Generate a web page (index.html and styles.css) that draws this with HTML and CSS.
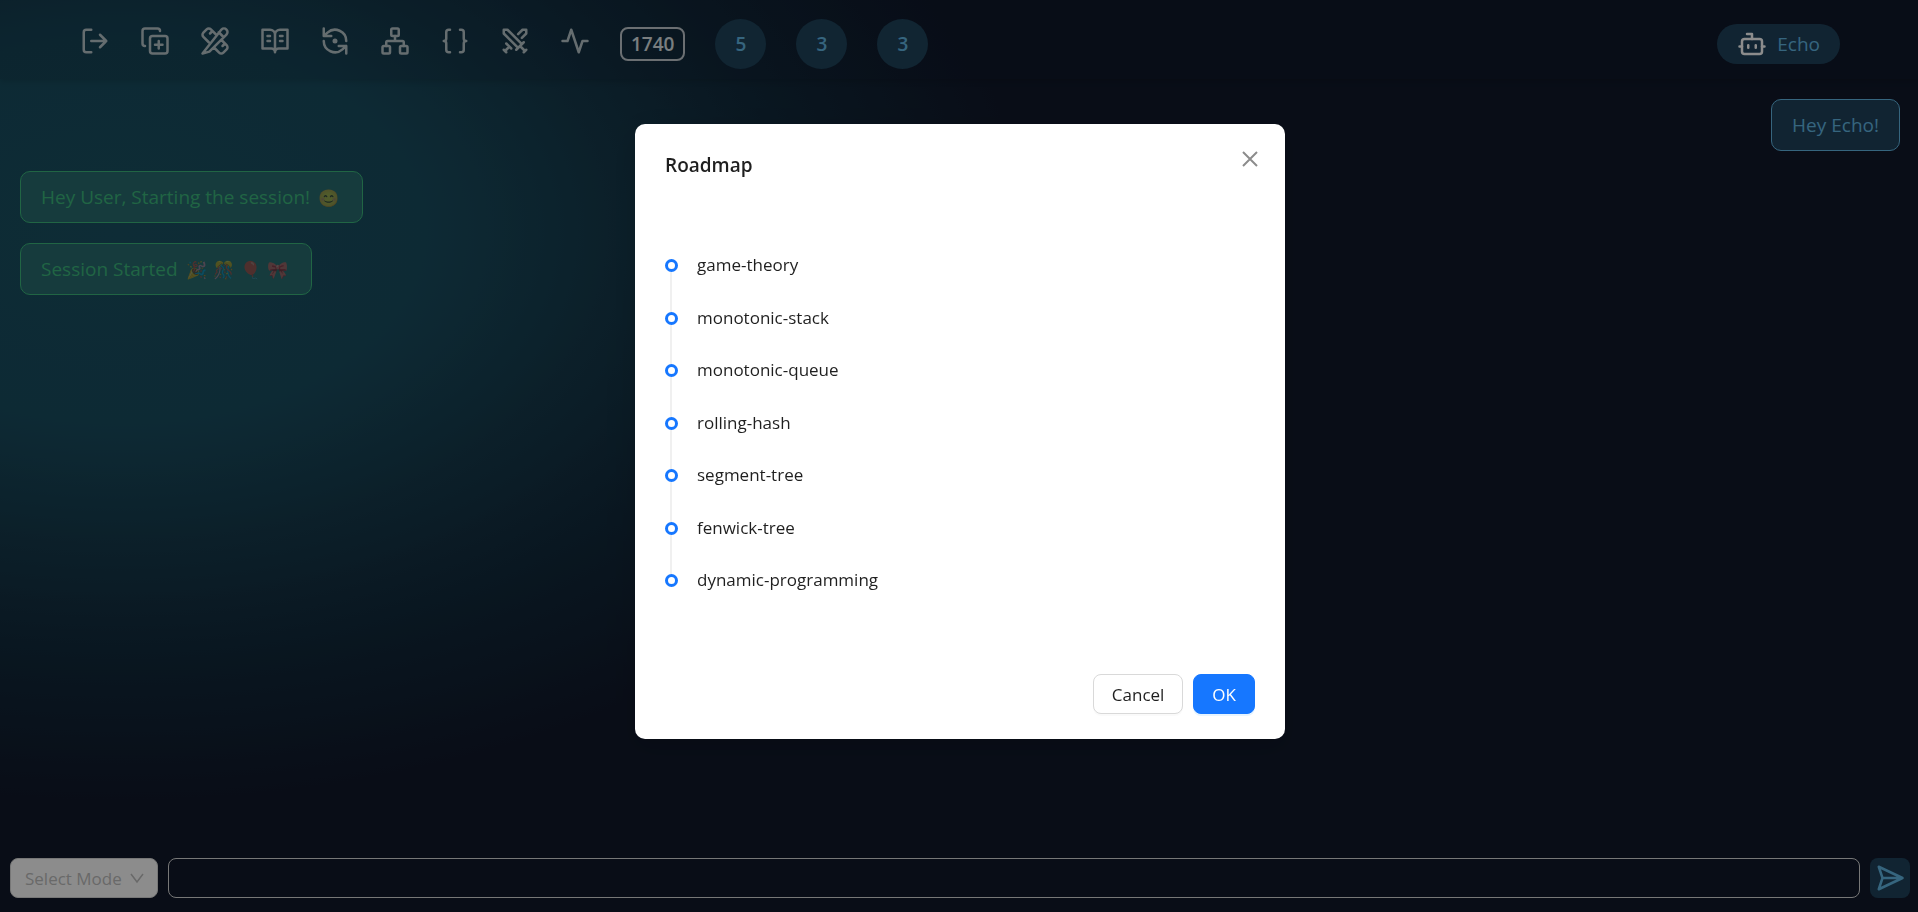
FILE: index.html
```html
<!DOCTYPE html>
<html lang="en">
<head>
<meta charset="utf-8">
<title>Echo</title>
<link rel="stylesheet" href="styles.css">
</head>
<body>
<div class="app">
  <header class="topbar">
    <nav class="tools" aria-label="Tools">
      <button class="tool" aria-label="Log out"><svg class="icon" viewBox="0 0 24 24"><path d="M9 21H5a2 2 0 0 1-2-2V5a2 2 0 0 1 2-2h4M16 17l5-5-5-5M21 12H9"/></svg></button>
      <button class="tool" aria-label="New session"><svg class="icon" viewBox="0 0 24 24"><path d="M15 12v6M12 15h6M4 16c-1.1 0-2-.9-2-2V4c0-1.1.9-2 2-2h10c1.1 0 2 .9 2 2"/><rect x="8" y="8" width="14" height="14" rx="2"/></svg></button>
      <button class="tool" aria-label="Practice"><svg class="icon" viewBox="0 0 24 24"><path d="m15 5 4 4M13 7 8.7 2.7a2.41 2.41 0 0 0-3.4 0L2.7 5.3a2.41 2.41 0 0 0 0 3.4L7 13M8 6l2-2M2 22l5.500-1.500L21.170 6.830a2.820 2.820 0 0 0-4-4ZM18 16l2-2M17 11l4.300 4.300c.94.94.94 2.460 0 3.400l-2.600 2.600c-.94.94-2.460.94-3.400 0L11 17"/></svg></button>
      <button class="tool" aria-label="Study"><svg class="icon" viewBox="0 0 24 24"><path d="M2 3h6a4 4 0 0 1 4 4v14a3 3 0 0 0-3-3H2zM22 3h-6a4 4 0 0 0-4 4v14a3 3 0 0 1 3-3h7zM6 8h2M6 12h2M16 8h2M16 12h2"/></svg></button>
      <button class="tool" aria-label="Revise"><svg class="icon" viewBox="0 0 24 24"><path d="M3 2v6h6M21 12A9 9 0 0 0 6 5.300L3 8M21 22v-6h-6M3 12a9 9 0 0 0 15 6.700l3-2.700"/><circle cx="12" cy="12" r="1"/></svg></button>
      <button class="tool" aria-label="Roadmap"><svg class="icon" viewBox="0 0 24 24"><rect x="16" y="16" width="6" height="6" rx="1"/><rect x="2" y="16" width="6" height="6" rx="1"/><rect x="9" y="2" width="6" height="6" rx="1"/><path d="M5 16v-3a1 1 0 0 1 1-1h12a1 1 0 0 1 1 1v3M12 12V8"/></svg></button>
      <button class="tool" aria-label="Code"><svg class="icon" viewBox="0 0 24 24"><path d="M8 3H7a2 2 0 0 0-2 2v5a2 2 0 0 1-2 2 2 2 0 0 1 2 2v5c0 1.100.9 2 2 2h1M16 21h1a2 2 0 0 0 2-2v-5c0-1.100.9-2 2-2a2 2 0 0 1-2-2V5a2 2 0 0 0-2-2h-1"/></svg></button>
      <button class="tool" aria-label="Contests"><svg class="icon" viewBox="0 0 24 24"><path d="M14.500 17.500 3 6V3h3l11.500 11.500M13 19l6-6M16 16l4 4M19 21l2-2M14.500 6.500 18 3h3v3l-3.500 3.500M5 14l4 4M7 17l-3 3M3 19l2 2"/></svg></button>
      <button class="tool" aria-label="Activity"><svg class="icon" viewBox="0 0 24 24"><path d="M22 12h-4l-3 9L9 3l-3 9H2"/></svg></button>
    </nav>
    <div class="stats">
      <span class="rating">1740</span>
      <span class="count">5</span>
      <span class="count">3</span>
      <span class="count">3</span>
    </div>
    <button class="bot"><svg class="icon bot-icon" viewBox="0 0 24 24"><path d="M12 8V4H8M2 14h2M20 14h2M15 13v2M9 13v2"/><rect x="4" y="8" width="16" height="12" rx="2"/></svg>Echo</button>
  </header>

  <main class="chat">
    <p class="message message-user">Hey Echo!</p>
    <p class="message message-bot">Hey User, Starting the session! <span class="emoji">😊</span></p>
    <p class="message message-bot">Session Started <span class="emoji">🎉</span><span class="emoji">🎊</span><span class="emoji">🎈</span><span class="emoji">🎀</span></p>
  </main>

  <form class="composer">
    <span class="mode">
      <select class="mode-select" aria-label="Mode"><option>Select Mode</option></select>
      <svg class="mode-arrow" viewBox="0 0 14 14"><path d="m1 3 6 8 6-8"/></svg>
    </span>
    <input class="prompt" type="text" aria-label="Message">
    <button class="send" type="button" aria-label="Send"><svg class="icon" viewBox="0 0 24 24"><path d="m3 3 3 9-3 9 19-9ZM6 12h16"/></svg></button>
  </form>
</div>

<div class="overlay">
  <section class="modal" role="dialog" aria-labelledby="modal-title">
    <button class="close" aria-label="Close"><svg class="close-icon" viewBox="0 0 16 16"><path d="m1 1 14 14M15 1 1 15"/></svg></button>
    <h2 class="modal-title" id="modal-title">Roadmap</h2>
    <ol class="timeline">
      <li class="step">game-theory</li>
      <li class="step">monotonic-stack</li>
      <li class="step">monotonic-queue</li>
      <li class="step">rolling-hash</li>
      <li class="step">segment-tree</li>
      <li class="step">fenwick-tree</li>
      <li class="step">dynamic-programming</li>
    </ol>
    <footer class="actions">
      <button class="btn">Cancel</button>
      <button class="btn btn-primary">OK</button>
    </footer>
  </section>
</div>
</body>
</html>
```

FILE: styles.css
```css
*, *::before, *::after { box-sizing: border-box; }

body, p, h2, ol {
  margin: 0;
  padding: 0;
}

body, button, input, select {
  font-family: "Open Sans", "Noto Sans", sans-serif;
}

button {
  border: 0;
  background: none;
  padding: 0;
  color: inherit;
  cursor: pointer;
}

.app {
  display: flex;
  flex-direction: column;
  min-height: 100vh;
  color: #fff;
  background:
    radial-gradient(ellipse 900px 570px at 120px 230px, #1a5163 0%, #194d60 34%, #163b4d 54%, #122a3c 74%, #11192b 100%),
    #11192b;
}

.icon {
  display: block;
  width: 30px;
  height: 30px;
  fill: none;
  stroke: currentColor;
  stroke-width: 2;
  stroke-linecap: round;
  stroke-linejoin: round;
}

.topbar {
  display: flex;
  align-items: center;
  gap: 30px;
  height: 79px;
  padding: 9px 78px 0 80px;
  background: rgba(15, 23, 42, 0.15);
  box-shadow: 0 2px 6px rgba(0, 0, 0, 0.15);
}

.tools {
  display: flex;
  gap: 30px;
  padding-bottom: 6px;
  color: #b9c6cb;
}

.stats {
  display: flex;
  align-items: center;
  gap: 30px;
  flex: 1;
  font-size: 19px;
  font-weight: 600;
}

.rating {
  padding: 0 9px;
  border: 2px solid #c3cbd0;
  border-radius: 8px;
  line-height: 30px;
  color: #dfe5e8;
}

.count {
  min-width: 51px;
  border-radius: 50%;
  line-height: 50px;
  text-align: center;
  color: #63b9e6;
  background: #1f445c;
}

.bot {
  display: flex;
  align-items: center;
  gap: 10px;
  height: 40px;
  padding: 0 20px;
  border-radius: 20px;
  font-size: 19px;
  font-weight: 500;
  color: #63b9e6;
  background: #1f435c;
}

.bot-icon { color: #fff; }

.chat {
  display: flex;
  flex: 1;
  flex-direction: column;
  align-items: flex-start;
  gap: 20px;
  padding: 20px 18px 20px 20px;
}

.message {
  padding: 0 20px;
  border: 1px solid;
  border-radius: 10px;
  font-size: 19px;
  line-height: 50px;
}

.message-user {
  align-self: flex-end;
  color: #63b9e6;
  background: #1f435c;
}

.message-bot {
  color: #3cb87c;
  background: #286c70;
}

.emoji {
  display: inline-block;
  width: 27px;
  font-size: 17px;
  line-height: 20px;
  text-align: center;
  opacity: 0.5;
}

.composer {
  display: flex;
  gap: 10px;
  padding: 0 8px 14px 10px;
}

.mode {
  position: relative;
  width: 148px;
}

.mode-select {
  width: 100%;
  height: 40px;
  padding: 0 14px;
  appearance: none;
  border: 1px solid #d9d9d9;
  border-radius: 8px;
  font-size: 17px;
  color: #bfbfbf;
  background: #fff;
}

.mode-arrow {
  position: absolute;
  top: 13px;
  right: 14px;
  width: 14px;
  height: 14px;
  fill: none;
  stroke: #bfbfbf;
  stroke-width: 1.5;
  pointer-events: none;
}

.prompt {
  flex: 1;
  min-width: 0;
  height: 40px;
  padding: 0 14px;
  border: 1px solid #d9d9d9;
  border-radius: 8px;
  font-size: 17px;
  color: #fff;
  background: transparent;
}

.send {
  display: grid;
  place-items: center;
  width: 40px;
  height: 40px;
  border-radius: 8px;
  color: #63b9e6;
  background: #1f435c;
}

.overlay {
  position: fixed;
  inset: 0;
  display: flex;
  align-items: flex-start;
  justify-content: center;
  padding: 124px 0 0 2px;
  background: rgba(0, 0, 0, 0.45);
}

.modal {
  position: relative;
  width: 650px;
  max-width: 100%;
  padding: 25px 30px;
  border-radius: 10px;
  color: rgba(0, 0, 0, 0.88);
  background: #fff;
  box-shadow: 0 8px 20px rgba(0, 0, 0, 0.08), 0 12px 35px 10px rgba(0, 0, 0, 0.05);
}

.close {
  position: absolute;
  top: 20px;
  right: 20px;
  display: grid;
  place-items: center;
  width: 30px;
  height: 30px;
}

.close-icon {
  width: 16px;
  height: 16px;
  fill: none;
  stroke: #8c8c8c;
  stroke-width: 2;
}

.modal-title {
  margin-bottom: 70px;
  font-size: 19px;
  font-weight: 600;
  line-height: 32px;
}

.timeline {
  display: grid;
  grid-auto-rows: 1fr;
  min-height: 368px;
  margin-bottom: 55px;
  list-style: none;
}

.step {
  position: relative;
  padding-left: 32px;
  font-size: 17px;
  line-height: 28px;
}

.step::before {
  content: "";
  position: absolute;
  top: 8px;
  left: 0;
  width: 13px;
  height: 13px;
  border: 3px solid #1677ff;
  border-radius: 50%;
}

.step:not(:last-child)::after {
  content: "";
  position: absolute;
  top: 21px;
  bottom: -8px;
  left: 5px;
  width: 2px;
  background: #f0f0f0;
}

.actions {
  display: flex;
  justify-content: flex-end;
  gap: 10px;
}

.btn {
  height: 40px;
  padding: 0 18px;
  border: 1px solid #d9d9d9;
  border-radius: 8px;
  font-size: 17px;
  background: #fff;
  box-shadow: 0 2px 0 rgba(0, 0, 0, 0.02);
}

.btn-primary {
  border-color: #1677ff;
  color: #fff;
  background: #1677ff;
  box-shadow: 0 2px 0 rgba(5, 145, 255, 0.1);
}
```
